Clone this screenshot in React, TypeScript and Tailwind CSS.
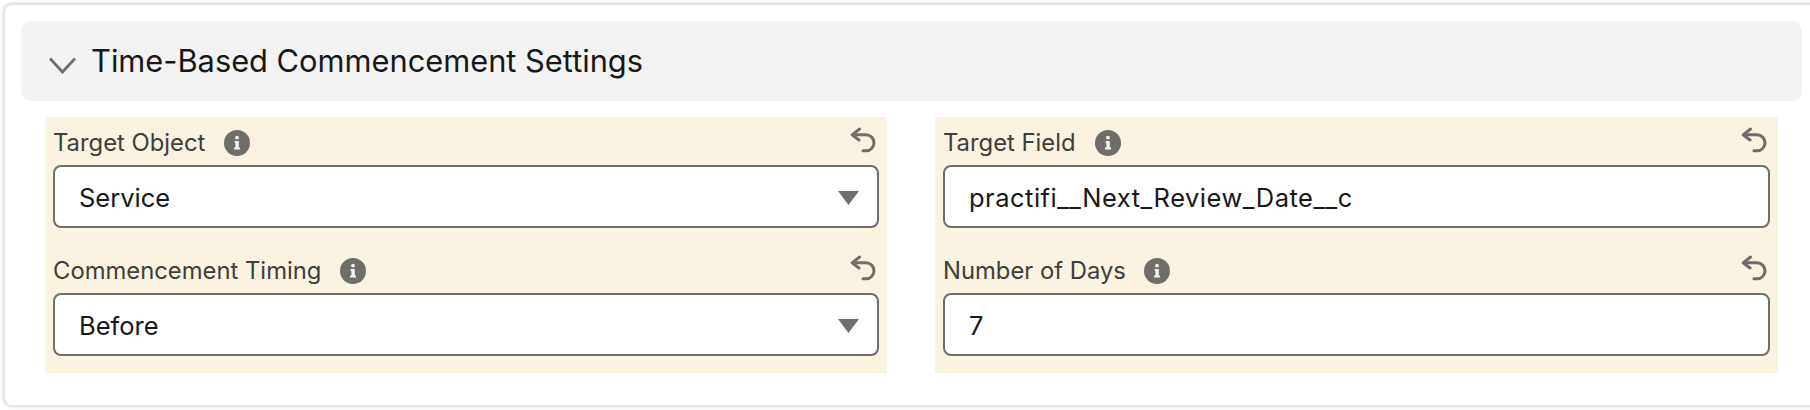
import React from "react";

function InfoIcon() {
  return (
    <svg width="26" height="26" viewBox="0 0 26 26" className="shrink-0">
      <circle cx="13" cy="13" r="13" fill="#706e6b" />
      <circle cx="13" cy="7.6" r="1.9" fill="#f3f2f0" />
      <path d="M10.6 11h4.2v6.6h1.3v1.9H10v-1.9h1.4v-4.7h-.8z" fill="#f3f2f0" />
    </svg>
  );
}

function UndoIcon() {
  return (
    <svg width="26" height="26" viewBox="0 0 26 26" fill="none" stroke="#706e6b" strokeWidth="3" strokeLinecap="round" strokeLinejoin="round" className="shrink-0">
      <path d="M9.5 2 2.2 7.8 9 13" />
      <path d="M2.8 7.8H16a7.6 7.6 0 0 1 0 16h-3" />
    </svg>
  );
}

function Caret() {
  return (
    <svg width="21" height="14" viewBox="0 0 21 14" className="shrink-0">
      <path d="M0 0h21L10.5 14z" fill="#706e6b" />
    </svg>
  );
}

function Field({ label, value, select, gap, valueClass }: { label: string; value: string; select?: boolean; gap: string; valueClass?: string }) {
  return (
    <div className="flex flex-col">
      <div className="flex h-12 items-center justify-between pt-1">
        <div className="flex items-center">
          <span className={`text-[23.8px] leading-none text-[#3e3e3c] ${gap}`}>{label}</span>
          <InfoIcon />
        </div>
        <div className="mr-[3px] -mt-1.5">
          <UndoIcon />
        </div>
      </div>
      <div className="flex h-[63px] items-center justify-between rounded-[8px] border-2 border-[#706e6b] bg-white pl-[24px] pr-[18px] pt-[2px]">
        <span className={`text-[25.5px] leading-none text-[#181818] ${valueClass ?? ""}`}>{value}</span>
        {select && <Caret />}
      </div>
    </div>
  );
}

export default function App() {
  return (
    <div className="h-[410px] w-[1810px] overflow-hidden bg-white pl-[4px] pt-[4px] font-['Inter',sans-serif]">
      <div className="h-[402px] w-[1830px] rounded-[8px] border border-[#e5e5e5] bg-white pl-[16px] pt-[16px] shadow-[0_0_4px_rgba(0,0,0,0.25)]">
        <div className="flex h-20 w-[1781px] items-center rounded-[10px] bg-[#f3f3f3] pl-[28px]">
          <svg width="27" height="17" viewBox="0 0 27 17" fill="none" stroke="#706e6b" strokeWidth="2.8" className="mr-[15px] mt-2 shrink-0">
            <path d="M1 1.5 13.5 15 26 1.5" />
          </svg>
          <span className="mt-[1px] text-[30.8px] leading-none text-[#181818]">Time-Based Commencement Settings</span>
        </div>
        <div className="ml-[24px] mt-4 grid w-[1733px] grid-cols-[842px_843px] gap-x-12">
          <div className="flex h-[256px] flex-col gap-[17px] bg-[#faf3e2] px-2">
            <Field label="Target Object" value="Service" select gap="mr-[19px]" />
            <Field label="Commencement Timing" value="Before" select gap="mr-[19px]" />
          </div>
          <div className="flex h-[256px] flex-col gap-[17px] bg-[#faf3e2] px-2">
            <Field label="Target Field" value="practifi__Next_Review_Date__c" gap="mr-[19px]" valueClass="tracking-[0.5px]" />
            <Field label="Number of Days" value="7" gap="mr-[18px]" />
          </div>
        </div>
      </div>
    </div>
  );
}
